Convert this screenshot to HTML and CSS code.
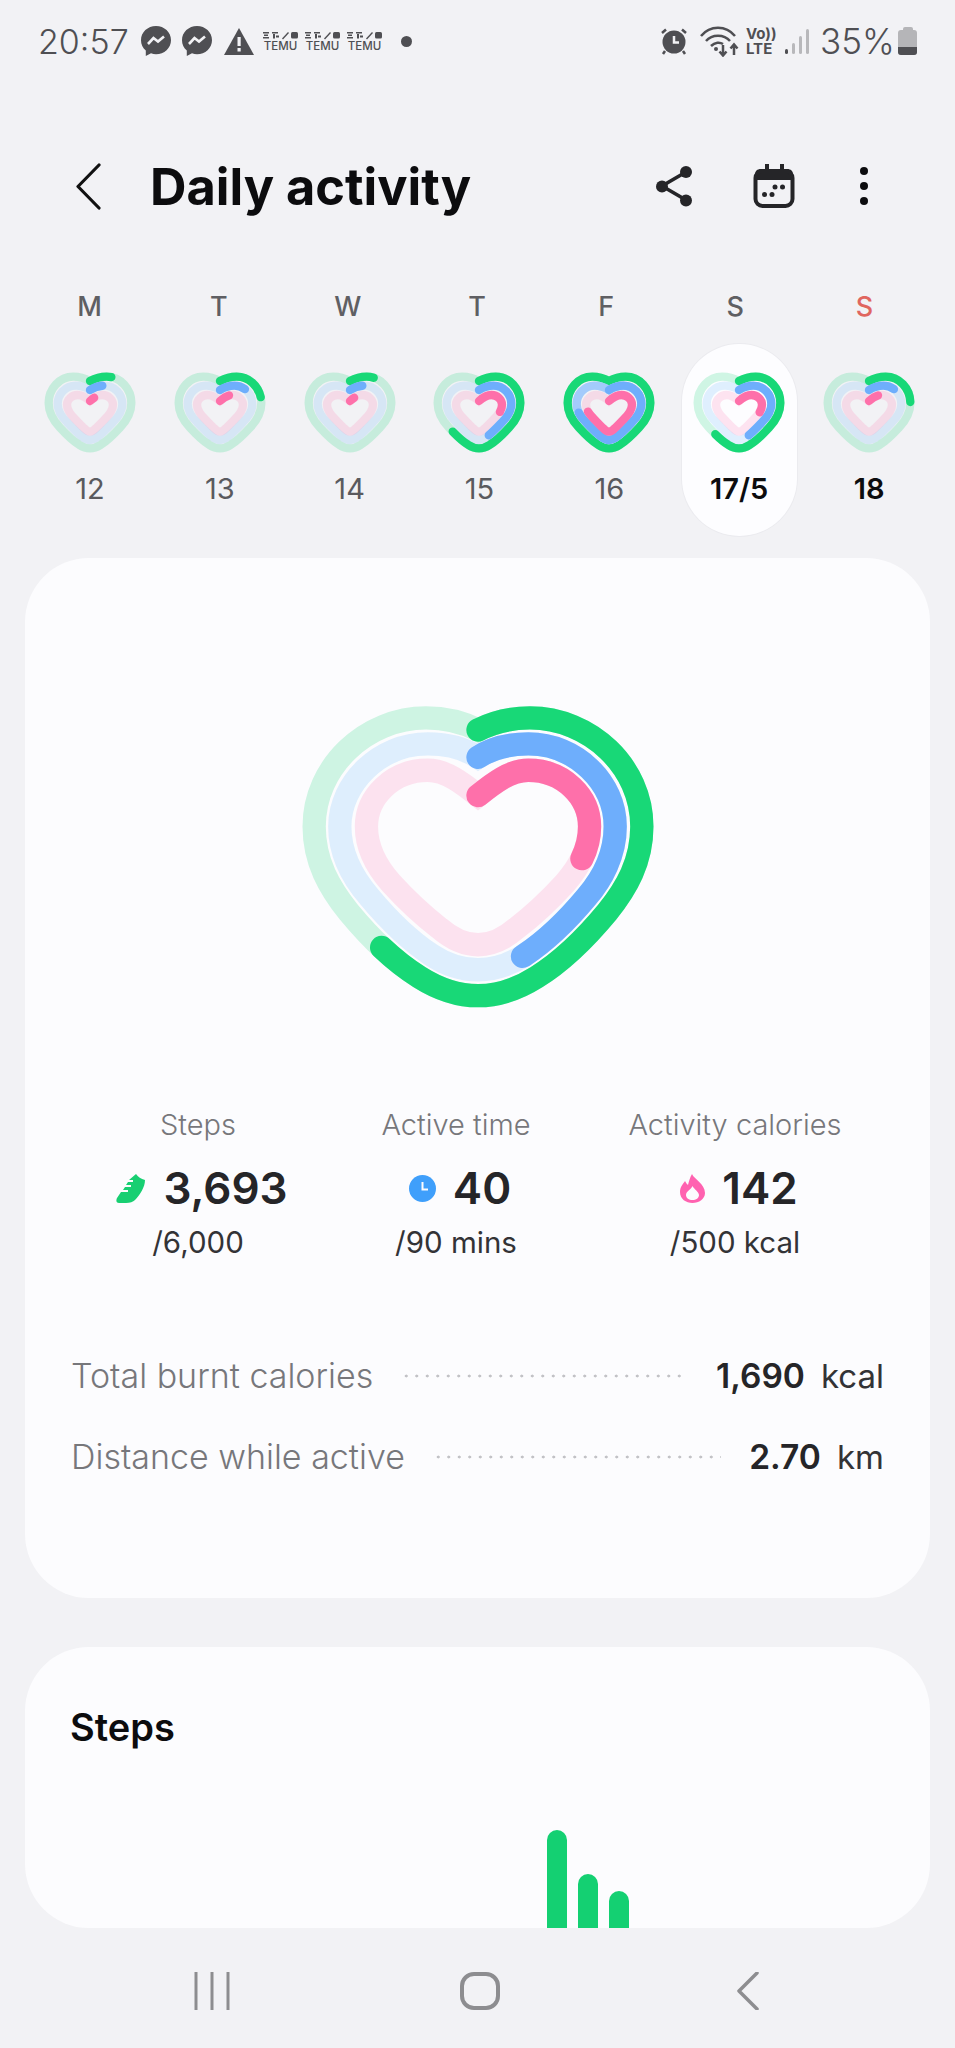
FILE: index.html
```html
<!DOCTYPE html>
<html lang="en">
<head>
  <meta charset="UTF-8">
  <meta name="viewport" content="width=device-width, initial-scale=1.0">
  <title>Daily activity</title>
  <link rel="stylesheet" href="styles.css">
</head>
<body>

  <!-- Shared shapes -->
  <svg class="sprite" xmlns="http://www.w3.org/2000/svg">
    <defs>
      <!-- big heart rings -->
      <path id="big-outer" pathLength="100" d="M594 150C640 127 695 114 750 114C930 114 1086 260 1086 440C1086 545 1040 625 982 697C905 790 835 852 770 892C710 930 650 948 594 948C538 948 478 930 418 892C353 852 283 790 206 697C148 625 102 545 102 440C102 260 258 114 438 114C493 114 548 127 594 150Z"/>
      <path id="big-mid" pathLength="100" d="M594 232C635 205 690 192 745 192C890 192 1006 310 1006 440C1006 525 965 600 920 652C855 730 795 785 735 825C690 855 640 870 594 870C548 870 498 855 453 825C393 785 333 730 268 652C223 600 179 525 179 440C179 310 298 192 443 192C498 192 553 205 594 232Z"/>
      <path id="big-inner" pathLength="100" d="M594 347C640 310 690 271 745 271C850 271 929 350 929 440C929 510 895 565 855 610C805 665 755 710 710 745C670 780 630 795 594 795C558 795 518 780 478 745C433 710 383 665 333 610C293 565 259 510 259 440C259 350 338 271 443 271C498 271 548 310 594 347Z"/>
      <!-- small heart rings -->
      <path id="sm-outer" pathLength="100" d="M150 36C165 28 182 23 200 23C242 23 274 60 274 102C274 132 258 157 240 176C218 200 198 218 183 227C172 234 161 238 150 238C139 238 128 234 117 227C102 218 82 200 60 176C42 157 26 132 26 102C26 60 58 23 100 23C118 23 135 28 150 36Z"/>
      <path id="sm-mid" pathLength="100" d="M150 63C163 55 177 50 193 50C224 50 247 76 247 105C247 128 233 146 218 161C200 180 185 195 174 203C166 209 158 213 150 213C142 213 134 209 126 203C115 195 100 180 82 161C67 146 53 128 53 105C53 76 76 50 107 50C123 50 137 55 150 63Z"/>
      <path id="sm-inner" pathLength="100" d="M150 96C160 87 172 78 187 78C205 78 219 92 219 107C219 125 207 138 195 150C182 163 174 172 167 178C161 185 155 188 150 188C145 188 139 185 133 178C126 172 118 163 105 150C93 138 81 125 81 107C81 92 95 78 113 78C128 78 140 87 150 96Z"/>
      <!-- status bar -->
      <g id="messenger">
        <path d="M15 0C6.700 0 0 6.200 0 14.200C0 18.400 1.800 22.100 4.800 24.600V30L10 27.300C11.600 27.800 13.300 28.200 15 28.200C23.300 28.200 30 22 30 14.200C30 6.200 23.300 0 15 0Z"/>
        <path class="messenger-bolt" d="M7 18L12.500 12L17 15.500L23 10.500"/>
      </g>
      <g id="temu-mark">
        <rect x="0" y="1" width="6" height="1.500"/><rect x="1" y="3.500" width="4" height="1.500"/><rect x="0" y="6" width="6" height="1.500"/>
        <rect x="9" y="1" width="6" height="1.500"/><rect x="10" y="3" width="2" height="4.500"/><rect x="13" y="4.500" width="3" height="2"/>
        <path d="M19 7.500L25 1L26 2L20 8.500Z"/>
        <rect x="28" y="1" width="7" height="6.500" rx="1.500"/>
      </g>
    </defs>
  </svg>

  <!-- Status bar -->
  <div class="status-bar">
    <div class="status-left">
      <span class="clock">20:57</span>
      <svg class="ic-msg" viewBox="0 0 30 30"><use href="#messenger"/></svg>
      <svg class="ic-msg" viewBox="0 0 30 30"><use href="#messenger"/></svg>
      <svg class="ic-warn" viewBox="0 0 30 27">
        <path d="M15 0L30 27H0Z"/>
        <rect class="cut" x="13.500" y="9" width="3.200" height="9"/>
        <rect class="cut" x="13.500" y="20" width="3.200" height="3.500"/>
      </svg>
      <div class="temu"><svg viewBox="0 0 35 9"><use href="#temu-mark"/></svg><span>TEMU</span></div>
      <div class="temu"><svg viewBox="0 0 35 9"><use href="#temu-mark"/></svg><span>TEMU</span></div>
      <div class="temu"><svg viewBox="0 0 35 9"><use href="#temu-mark"/></svg><span>TEMU</span></div>
      <span class="status-dot"></span>
    </div>
    <div class="status-right">
      <svg class="ic-alarm" viewBox="0 0 28 28">
        <circle cx="14" cy="15" r="11.500"/>
        <path class="cut-line" d="M14 9V15.500H19"/>
        <path class="alarm-line" d="M2 6L6 2.500M26 6L22 2.500M5 24L3 27M23 24L25 27"/>
      </svg>
      <svg class="ic-wifi" viewBox="0 0 40 31">
        <path d="M1 10C10 -1 26 -1 35 10M6 15C12 8 24 8 30 15M11 20C15 16 20 16 23 18"/>
        <circle class="fill" cx="16" cy="23" r="2"/>
        <path d="M23 19V29M19.500 25.500L23 29.500L26.500 25.500M34 29V19M30.500 22.500L34 18.500L37.500 22.500"/>
      </svg>
      <div class="volte"><span>Vo))</span><span>LTE</span></div>
      <div class="signal">
        <span class="bar-on"></span><span class="bar-2"></span><span class="bar-3"></span><span class="bar-4"></span>
      </div>
      <span class="percent">35%</span>
      <div class="battery"><span class="battery-cap"></span><span class="battery-body"><span class="battery-level"></span></span></div>
    </div>
  </div>

  <!-- Title row -->
  <header class="app-bar">
    <svg class="back" viewBox="0 0 26 47"><path d="M24 2L3 23.500L24 45"/></svg>
    <h1>Daily activity</h1>
    <svg class="share" viewBox="0 0 38 42">
      <path d="M31 7L7 21L31 35"/>
      <circle cx="31" cy="7" r="6"/><circle cx="7" cy="21.500" r="6"/><circle cx="31" cy="35.500" r="6"/>
    </svg>
    <svg class="calendar" viewBox="0 0 42 44">
      <path class="cal-fill" d="M8 5H34C38 5 40 7 40 11V16H2V11C2 7 4 5 8 5Z"/>
      <rect class="cal-frame" x="2.500" y="7" width="37" height="35" rx="7"/>
      <path class="cal-frame" d="M14 0V6M29 0V6"/>
      <circle cx="22" cy="23" r="2.500"/><circle cx="29.500" cy="23" r="2.500"/>
      <circle cx="11.500" cy="30.500" r="2.500"/><circle cx="19" cy="30.500" r="2.500"/>
    </svg>
    <div class="more"><span></span><span></span><span></span></div>
  </header>

  <!-- Week strip -->
  <div class="week-names">
    <div class="day-name">M</div>
    <div class="day-name">T</div>
    <div class="day-name">W</div>
    <div class="day-name">T</div>
    <div class="day-name">F</div>
    <div class="day-name">S</div>
    <div class="day-name sunday">S</div>
  </div>

  <section class="week-days">
    <div class="day-cell">
      <svg class="mini-heart" viewBox="0 0 300 270">
        <use href="#sm-outer" class="track-green"/><use href="#sm-mid" class="track-blue"/><use href="#sm-inner" class="track-pink"/>
        <use href="#sm-outer" class="arc-green" stroke-dasharray="9 100"/>
        <use href="#sm-mid" class="arc-blue" stroke-dasharray="7 100"/>
        <use href="#sm-inner" class="arc-pink" stroke-dasharray="4 100"/>
      </svg>
      <div class="day-num">12</div>
    </div>
    <div class="day-cell">
      <svg class="mini-heart" viewBox="0 0 300 270">
        <use href="#sm-outer" class="track-green"/><use href="#sm-mid" class="track-blue"/><use href="#sm-inner" class="track-pink"/>
        <use href="#sm-outer" class="arc-green" stroke-dasharray="21 100"/>
        <use href="#sm-mid" class="arc-blue" stroke-dasharray="14 100"/>
        <use href="#sm-inner" class="arc-pink" stroke-dasharray="8 100"/>
      </svg>
      <div class="day-num">13</div>
    </div>
    <div class="day-cell">
      <svg class="mini-heart" viewBox="0 0 300 270">
        <use href="#sm-outer" class="track-green"/><use href="#sm-mid" class="track-blue"/><use href="#sm-inner" class="track-pink"/>
        <use href="#sm-outer" class="arc-green" stroke-dasharray="10 100"/>
        <use href="#sm-mid" class="arc-blue" stroke-dasharray="7 100"/>
        <use href="#sm-inner" class="arc-pink" stroke-dasharray="4 100"/>
      </svg>
      <div class="day-num">14</div>
    </div>
    <div class="day-cell">
      <svg class="mini-heart" viewBox="0 0 300 270">
        <use href="#sm-outer" class="track-green"/><use href="#sm-mid" class="track-blue"/><use href="#sm-inner" class="track-pink"/>
        <use href="#sm-outer" class="arc-green" stroke-dasharray="63 100"/>
        <use href="#sm-mid" class="arc-blue" stroke-dasharray="44 100"/>
        <use href="#sm-inner" class="arc-pink" stroke-dasharray="28 100"/>
      </svg>
      <div class="day-num">15</div>
    </div>
    <div class="day-cell">
      <svg class="mini-heart" viewBox="0 0 300 270">
        <use href="#sm-outer" class="track-green"/><use href="#sm-mid" class="track-blue"/><use href="#sm-inner" class="track-pink"/>
        <use href="#sm-outer" class="arc-green"/>
        <use href="#sm-mid" class="arc-blue-soft"/>
        <use href="#sm-mid" class="arc-blue" stroke-dasharray="72 100"/>
        <use href="#sm-inner" class="arc-pink" stroke-dasharray="72 100"/>
      </svg>
      <div class="day-num">16</div>
    </div>
    <div class="day-cell selected">
      <svg class="mini-heart" viewBox="0 0 300 270">
        <use href="#sm-outer" class="track-green"/><use href="#sm-mid" class="track-blue"/><use href="#sm-inner" class="track-pink"/>
        <use href="#sm-outer" class="arc-green" stroke-dasharray="61.500 100"/>
        <use href="#sm-mid" class="arc-blue" stroke-dasharray="44 100"/>
        <use href="#sm-inner" class="arc-pink" stroke-dasharray="28.400 100"/>
      </svg>
      <div class="day-num">17/5</div>
    </div>
    <div class="day-cell">
      <svg class="mini-heart" viewBox="0 0 300 270">
        <use href="#sm-outer" class="track-green"/><use href="#sm-mid" class="track-blue"/><use href="#sm-inner" class="track-pink"/>
        <use href="#sm-outer" class="arc-green" stroke-dasharray="23 100"/>
        <use href="#sm-mid" class="arc-blue" stroke-dasharray="14 100"/>
        <use href="#sm-inner" class="arc-pink" stroke-dasharray="8 100"/>
      </svg>
      <div class="day-num today">18</div>
    </div>
  </section>

  <!-- Summary card -->
  <section class="card summary">
    <svg class="big-heart" viewBox="0 0 1188 1060">
      <use href="#big-outer" class="track-green"/><use href="#big-mid" class="track-blue"/><use href="#big-inner" class="track-pink"/>
      <use href="#big-outer" class="arc-green" stroke-dasharray="61.500 100"/>
      <use href="#big-mid" class="arc-blue" stroke-dasharray="44 100"/>
      <use href="#big-inner" class="arc-pink" stroke-dasharray="28.400 100"/>
    </svg>

    <div class="stats">
      <div class="stat">
        <div class="stat-label">Steps</div>
        <div class="stat-value">
          <svg class="ic-shoe" viewBox="0 0 30 30"><path d="M20 1C22 4 25 6 29 7C29 14 24 22 19 27C17 29 14 30 10 30H3C0 30 0 27 1 25L5 19H12V17H7L9 14H15V12H10L12 9H17V7H13Z"/></svg>
          <span>3,693</span>
        </div>
        <div class="stat-goal">/6,000</div>
      </div>
      <div class="stat">
        <div class="stat-label">Active time</div>
        <div class="stat-value">
          <svg class="ic-clock" viewBox="0 0 27 27"><circle cx="13.500" cy="13.500" r="13.500"/><path d="M13.500 7V14.500H19"/></svg>
          <span>40</span>
        </div>
        <div class="stat-goal">/90 mins</div>
      </div>
      <div class="stat">
        <div class="stat-label">Activity calories</div>
        <div class="stat-value">
          <svg class="ic-flame" viewBox="0 0 25 29">
            <path d="M12 0C14 5 25 10 25 19C25 25 19 29 12.500 29C6 29 0 25 0 18C0 13 3 10 5 7C6 9 7 10 8 11C9 7 10 3 12 0Z"/>
            <path class="flame-core" d="M12.500 12C14 15 19 18 19 21C19 24 16 26 12.500 26C9 26 6 24 6 21C6 17 11 16 12.500 12Z"/>
          </svg>
          <span>142</span>
        </div>
        <div class="stat-goal">/500 kcal</div>
      </div>
    </div>

    <div class="totals">
      <div class="total-row">
        <span class="total-label">Total burnt calories</span>
        <span class="dots"></span>
        <span class="total-num">1,690</span>
        <span class="total-unit">kcal</span>
      </div>
      <div class="total-row">
        <span class="total-label">Distance while active</span>
        <span class="dots"></span>
        <span class="total-num">2.70</span>
        <span class="total-unit">km</span>
      </div>
    </div>
  </section>

  <!-- Steps card, cut off by the nav bar -->
  <section class="card steps-card">
    <h2>Steps</h2>
    <div class="chart">
      <div class="chart-bar tall"></div>
      <div class="chart-bar mid"></div>
      <div class="chart-bar low"></div>
    </div>
  </section>

  <!-- Android nav bar -->
  <nav class="nav-bar">
    <svg class="nav-recent" viewBox="0 0 36 38"><path d="M2 0V38M18 0V38M34 0V38"/></svg>
    <svg class="nav-home" viewBox="0 0 40 38"><rect x="2" y="2" width="36" height="34" rx="12"/></svg>
    <svg class="nav-back" viewBox="0 0 22 38"><path d="M20 1L2 19L20 37"/></svg>
  </nav>

</body>
</html>
```
FILE: styles.css
```css
/* Page */
body {
  margin: 0;
  width: 955px;
  height: 2048px;
  overflow: hidden;
  background-color: #f2f2f5;
  font-family: 'Inter', 'Liberation Sans', sans-serif;
  color: #252528;
  display: flex;
  flex-direction: column;
}

.sprite {
  display: none;
}

/* Status bar */
.status-bar {
  height: 82px;
  flex-shrink: 0;
  display: flex;
  align-items: center;
  justify-content: space-between;
  padding: 0 38px 0 38px;
  color: #4f4f53;
}

.status-left,
.status-right {
  display: flex;
  align-items: center;
}

.clock {
  font-size: 34px;
  font-weight: 300;
  width: 103px;
}

.ic-msg {
  width: 30px;
  height: 30px;
  margin-right: 11px;
  fill: #4f4f53;
}

.messenger-bolt {
  fill: none;
  stroke: #f2f2f5;
  stroke-width: 2.6;
}

.ic-warn {
  width: 30px;
  height: 27px;
  margin-left: 1px;
  margin-right: 9px;
  fill: #4f4f53;
}

.cut {
  fill: #f2f2f5;
}

.temu {
  width: 35px;
  margin-right: 7px;
  display: flex;
  flex-direction: column;
  align-items: center;
  gap: 1px;
}

.temu svg {
  width: 35px;
  height: 9px;
  fill: #4f4f53;
}

.temu span {
  font-size: 11.500px;
  line-height: 11px;
  font-weight: 500;
}

.status-dot {
  width: 11px;
  height: 11px;
  border-radius: 50%;
  background-color: #4f4f53;
  margin-left: 12px;
}

.ic-alarm {
  width: 28px;
  height: 28px;
  margin-right: 12px;
  fill: #4f4f53;
}

.cut-line {
  fill: none;
  stroke: #f2f2f5;
  stroke-width: 2.500;
}

.alarm-line {
  fill: none;
  stroke: #4f4f53;
  stroke-width: 2.500;
}

.ic-wifi {
  width: 40px;
  height: 31px;
  margin-right: 6px;
  fill: none;
  stroke: #4f4f53;
  stroke-width: 2.500;
}

.ic-wifi .fill {
  fill: #4f4f53;
  stroke: none;
}

.volte {
  width: 30px;
  display: flex;
  flex-direction: column;
  font-size: 15px;
  line-height: 15px;
  font-weight: 700;
  margin-right: 9px;
}

.signal {
  display: flex;
  align-items: flex-end;
  gap: 4px;
  height: 26px;
  margin-right: 11px;
}

.signal span {
  width: 3px;
  background-color: #b8b8bb;
  border-radius: 2px;
}

.signal .bar-on {
  height: 5px;
  background-color: #4f4f53;
}

.signal .bar-2 {
  height: 11px;
}

.signal .bar-3 {
  height: 18px;
}

.signal .bar-4 {
  height: 25px;
}

.percent {
  font-size: 35px;
  font-weight: 300;
  width: 78px;
}

.battery {
  width: 19px;
  display: flex;
  flex-direction: column;
  align-items: center;
}

.battery-cap {
  width: 10px;
  height: 3px;
  background-color: #b5b5b8;
  border-radius: 2px 2px 0 0;
}

.battery-body {
  width: 19px;
  height: 25px;
  background-color: #b5b5b8;
  border-radius: 3px;
  display: flex;
  align-items: flex-end;
  overflow: hidden;
}

.battery-level {
  width: 100%;
  height: 8px;
  background-color: #4f4f53;
}

/* Title row */
.app-bar {
  height: 100px;
  flex-shrink: 0;
  margin-top: 54px;
  display: flex;
  align-items: center;
  padding-left: 75px;
}

.back {
  width: 26px;
  height: 47px;
  fill: none;
  stroke: #111;
  stroke-width: 3.200;
  stroke-linecap: round;
  stroke-linejoin: round;
}

h1 {
  margin: 0 0 0 49px;
  font-size: 50.500px;
  font-weight: 700;
  letter-spacing: 0;
  color: #0c0c0e;
  width: 505px;
}

.share {
  width: 38px;
  height: 42px;
  fill: #252528;
  stroke: #252528;
  stroke-width: 0;
  margin-left: 0;
}

.share path {
  fill: none;
  stroke-width: 3.600;
}

.calendar {
  width: 42px;
  height: 44px;
  margin-left: 60px;
  fill: #252528;
}

.cal-frame {
  fill: none;
  stroke: #252528;
  stroke-width: 4;
}

.more {
  width: 9px;
  margin-left: 65px;
  display: flex;
  flex-direction: column;
  gap: 7px;
}

.more span {
  width: 8px;
  height: 8px;
  border-radius: 50%;
  background-color: #0c0c0e;
}

/* Week strip */
.week-names {
  margin: 51px 26px 0 25px;
  flex-shrink: 0;
  display: grid;
  grid-template-columns: repeat(7, 1fr);
}

.day-name {
  height: 40px;
  line-height: 40px;
  text-align: center;
  font-size: 27px;
  font-weight: 500;
  color: #5f5f63;
}

.day-name.sunday {
  color: #e0665f;
}

.week-days {
  margin: 17px 21px 0 25px;
  flex-shrink: 0;
  display: grid;
  grid-template-columns: repeat(7, 1fr);
  justify-items: center;
}

.day-cell {
  width: 115px;
  height: 192px;
  box-sizing: border-box;
  padding-top: 25px;
  display: flex;
  flex-direction: column;
  align-items: center;
  border-radius: 58px;
}

.day-cell.selected {
  background-color: #fdfdff;
  box-shadow: 0 0 0 1px #ebebef;
}

.mini-heart {
  width: 100px;
  height: 90px;
  flex-shrink: 0;
  fill: none;
  stroke-width: 25;
  stroke-linecap: round;
}

.day-num {
  margin-top: 10px;
  font-size: 29px;
  line-height: 40px;
  color: #5a5a5e;
}

.selected .day-num,
.day-num.today {
  color: #0c0c0e;
  font-weight: 600;
}

/* Rings */
.track-green {
  stroke: rgba(24, 216, 119, 0.2);
}

.track-blue {
  stroke: rgba(90, 180, 250, 0.18);
}

.track-pink {
  stroke: rgba(254, 112, 170, 0.18);
}

.arc-green {
  stroke: #18d877;
}

.arc-blue {
  stroke: #6eaefc;
}

.arc-blue-soft {
  stroke: #a3cbfb;
}

.arc-pink {
  stroke: #fe70aa;
}

/* Cards */
.card {
  margin: 0 25px;
  box-sizing: border-box;
  flex-shrink: 0;
  background-color: #fcfcfe;
  border-radius: 64px;
}

.summary {
  height: 1040px;
  margin-top: 22px;
  padding-top: 122px;
}

.big-heart {
  display: block;
  width: 396px;
  height: 353px;
  margin: 0 auto;
  fill: none;
  stroke-width: 70;
  stroke-linecap: round;
}

.stats {
  margin: 72px 23px 0 47px;
  display: grid;
  grid-template-columns: 252px 264px 294px;
}

.stat {
  display: flex;
  flex-direction: column;
  align-items: center;
}

.stat-label {
  font-size: 29px;
  line-height: 40px;
  font-weight: 300;
  color: #77777b;
}

.stat-value {
  margin-top: 13px;
  padding-left: 8px;
  display: flex;
  align-items: center;
  gap: 17px;
  font-size: 44px;
  line-height: 60px;
  font-weight: 600;
}

.ic-shoe {
  width: 30px;
  height: 30px;
  fill: #18cf72;
}

.ic-clock {
  width: 27px;
  height: 27px;
  fill: #3f9ffb;
}

.ic-clock path {
  fill: none;
  stroke: #fcfcfe;
  stroke-width: 2;
}

.ic-flame {
  width: 25px;
  height: 29px;
  fill: #ff62b0;
}

.flame-core {
  fill: #fcfcfe;
}

.stat-goal {
  margin-top: 4px;
  font-size: 29.500px;
  line-height: 40px;
  color: #333336;
}

.totals {
  margin: 92px 46px 0 46px;
  display: flex;
  flex-direction: column;
  gap: 37px;
}

.total-row {
  display: flex;
  align-items: center;
  font-size: 34px;
  line-height: 44px;
}

.total-label {
  font-weight: 300;
  color: #77777b;
}

.dots {
  flex: 1;
  height: 4px;
  margin: 0 28px;
  background-image: radial-gradient(circle, #c2c2c6 1.300px, transparent 1.700px);
  background-size: 10.500px 4px;
}

.total-num {
  font-size: 33.500px;
  font-weight: 600;
}

.total-unit {
  margin-left: 16px;
  font-size: 33px;
  color: #333336;
}

.steps-card {
  height: 281px;
  margin-top: 49px;
  padding-top: 58px;
  overflow: hidden;
  display: flex;
  flex-direction: column;
  border-radius: 64px;
}

h2 {
  margin: 0 0 0 45px;
  font-size: 38px;
  line-height: 44px;
  font-weight: 600;
  color: #0c0c0e;
}

.chart {
  flex: 1;
  display: flex;
  align-items: flex-end;
  gap: 11px;
  padding-left: 522px;
}

.chart-bar {
  width: 20px;
  background-color: #14d072;
  border-radius: 10px 10px 0 0;
}

.chart-bar.tall {
  height: 98px;
}

.chart-bar.mid {
  height: 54px;
}

.chart-bar.low {
  height: 37px;
}

/* Nav bar */
.nav-bar {
  flex: 1;
  display: flex;
  align-items: flex-start;
  padding-top: 44px;
}

.nav-bar svg {
  height: 38px;
  fill: none;
  stroke: #8d8d90;
  stroke-linecap: round;
}

.nav-recent {
  width: 36px;
  margin-left: 194px;
  stroke-width: 3;
}

.nav-home {
  width: 40px;
  margin-left: 230px;
  stroke-width: 4;
}

.nav-back {
  width: 22px;
  margin-left: 237px;
  stroke-width: 3.500;
  stroke-linejoin: round;
}
```
